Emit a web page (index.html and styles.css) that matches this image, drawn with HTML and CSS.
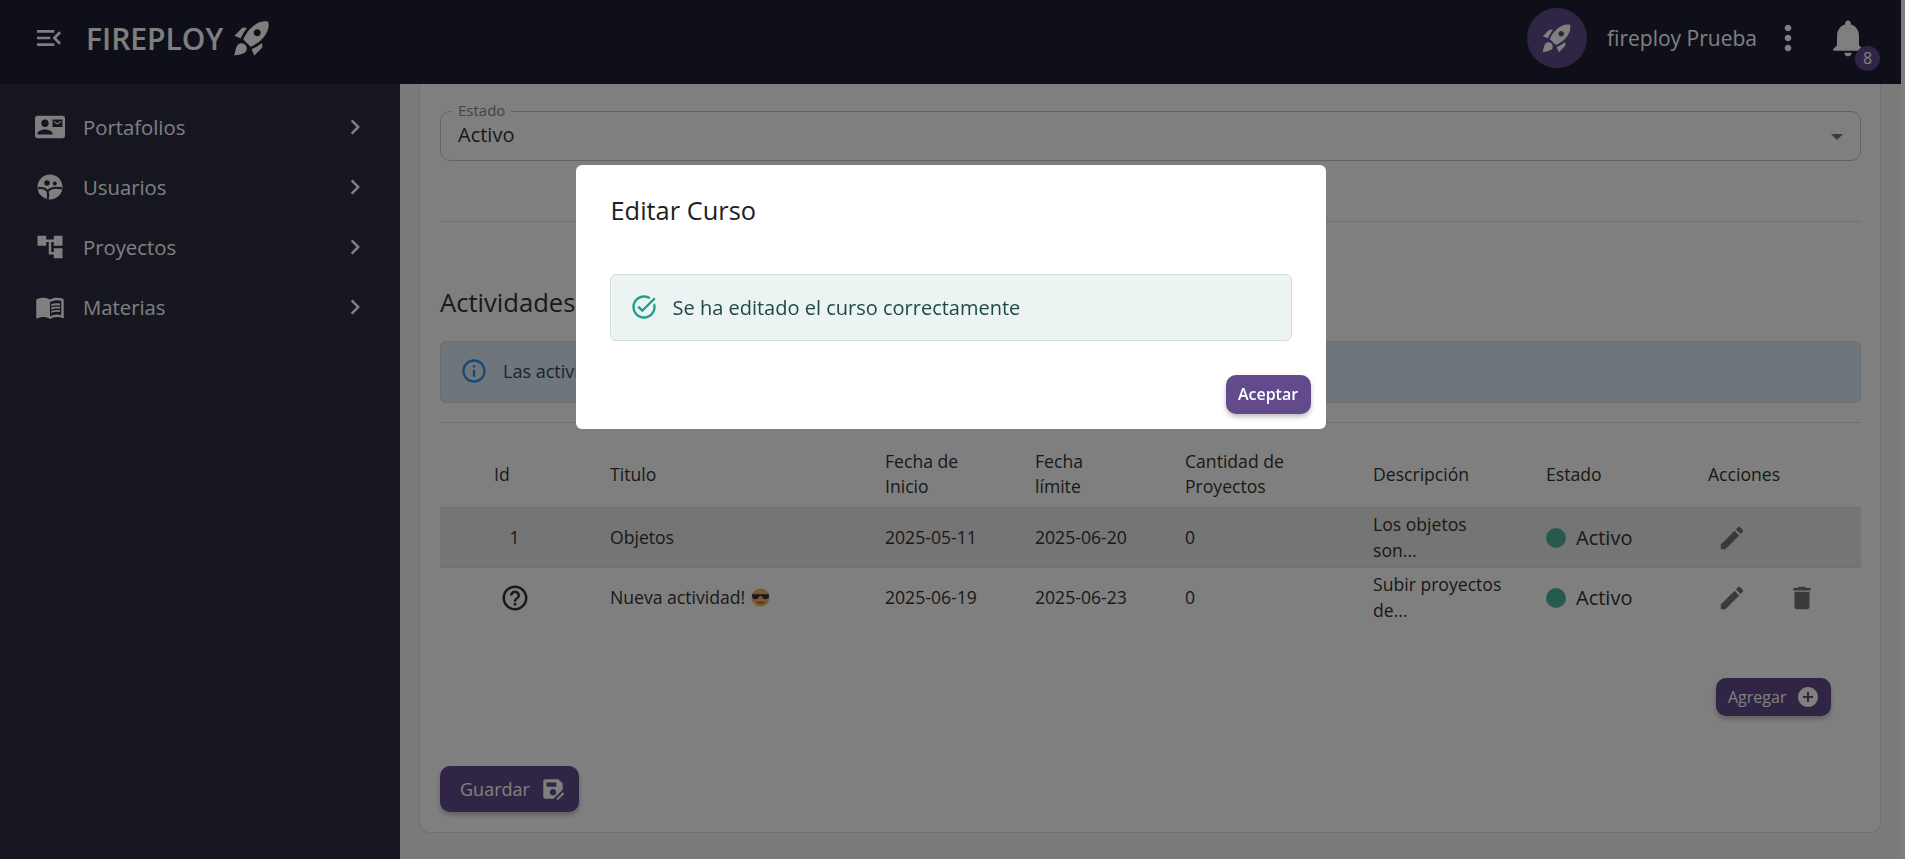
FILE: index.html
```html
<!DOCTYPE html>
<html lang="es">
<head>
  <meta charset="UTF-8" />
  <meta name="viewport" content="width=device-width, initial-scale=1" />
  <title>Fireploy</title>
  <link rel="stylesheet" href="styles.css">
</head>
<body>

  <div class="app">
    <header class="topbar">
      <div class="brand">
        <svg class="menu-icon" viewBox="0 0 24 24"><path d="M3 18h13v-2H3v2zm0-5h10v-2H3v2zm0-7v2h13V6H3zm18 9.59L17.42 12 21 8.41 19.59 7l-5 5 5 5L21 15.59z"/></svg>
        <span class="brand-name">FIREPLOY</span>
        <svg class="brand-rocket" viewBox="0 0 24 24"><path d="M9.19 6.35c-2.04 2.29-3.44 5.58-3.57 5.89L2 10.69l4.05-4.05c.47-.47 1.15-.68 1.81-.55l1.33.26zM11.17 17s3.74-1.55 5.89-3.7c5.4-5.4 4.5-9.62 4.21-10.57-.95-.3-5.17-1.19-10.57 4.21C8.55 9.09 7 12.83 7 12.83L11.17 17zm6.48-2.19c-2.29 2.04-5.58 3.44-5.89 3.57L13.31 22l4.05-4.05c.47-.47.68-1.15.55-1.81l-.26-1.33zM9 18c0 .83-.34 1.58-.88 2.12C6.94 21.3 2 22 2 22s.7-4.94 1.88-6.12C4.42 15.34 5.17 15 6 15c1.66 0 3 1.34 3 3zm4-9c0-1.1.9-2 2-2s2 .9 2 2-.9 2-2 2-2-.9-2-2z"/></svg>
      </div>
      <div class="user">
        <div class="avatar">
          <svg viewBox="0 0 24 24"><path d="M9.19 6.35c-2.04 2.29-3.44 5.58-3.57 5.89L2 10.69l4.05-4.05c.47-.47 1.15-.68 1.81-.55l1.33.26zM11.17 17s3.74-1.55 5.89-3.7c5.4-5.4 4.5-9.62 4.21-10.57-.95-.3-5.17-1.19-10.57 4.21C8.55 9.09 7 12.83 7 12.83L11.17 17zm6.48-2.19c-2.29 2.04-5.58 3.44-5.89 3.57L13.31 22l4.05-4.05c.47-.47.68-1.15.55-1.81l-.26-1.33zM9 18c0 .83-.34 1.58-.88 2.12C6.94 21.3 2 22 2 22s.7-4.94 1.88-6.12C4.42 15.34 5.17 15 6 15c1.66 0 3 1.34 3 3zm4-9c0-1.1.9-2 2-2s2 .9 2 2-.9 2-2 2-2-.9-2-2z"/></svg>
        </div>
        <span class="user-name">fireploy Prueba</span>
        <svg class="more-icon" viewBox="0 0 24 24"><path d="M12 8c1.1 0 2-.9 2-2s-.9-2-2-2-2 .9-2 2 .9 2 2 2zm0 2c-1.1 0-2 .9-2 2s.9 2 2 2 2-.9 2-2-.9-2-2-2zm0 6c-1.1 0-2 .9-2 2s.9 2 2 2 2-.9 2-2-.9-2-2-2z"/></svg>
        <div class="bell">
          <svg viewBox="0 0 24 24"><path d="M12 22c1.1 0 2-.9 2-2h-4c0 1.1.89 2 2 2zm6-6v-5c0-3.07-1.64-5.64-4.5-6.32V4c0-.83-.67-1.5-1.5-1.5s-1.5.67-1.5 1.5v.68C7.63 5.36 6 7.92 6 11v5l-2 2v1h16v-1l-2-2z"/></svg>
          <span class="badge">8</span>
        </div>
      </div>
    </header>

    <div class="layout">
      <nav class="sidebar">
        <a class="nav-item">
          <svg class="nav-icon" viewBox="0 0 24 24"><path d="M21 8V7l-3 2-3-2v1l3 2 3-2zm1-5H2C.9 3 0 3.9 0 5v14c0 1.1.9 2 2 2h20c1.1 0 1.99-.9 1.99-2L24 5c0-1.1-.9-2-2-2zM8 6c1.66 0 3 1.34 3 3s-1.34 3-3 3-3-1.34-3-3 1.34-3 3-3zm6 12H2v-1c0-2 4-3.1 6-3.1s6 1.1 6 3.1v1zm8-6h-8V6h8v6z"/></svg>
          <span class="nav-label">Portafolios</span>
          <svg class="nav-arrow" viewBox="0 0 24 24"><path d="M10 6 8.59 7.41 13.17 12l-4.58 4.59L10 18l6-6z"/></svg>
        </a>
        <a class="nav-item">
          <svg class="nav-icon" viewBox="0 0 24 24">
            <circle cx="12" cy="12" r="10" />
            <circle class="icon-cut" cx="9.600" cy="8.800" r="2.200" />
            <circle class="icon-cut" cx="15.800" cy="9.200" r="1.600" />
            <path class="icon-line" d="M2.500 13c3-.6 6 .2 7.600 2.500.6 1.800.5 4.200 0 6.500M10.100 15.500c1.800-2.400 6.400-3.400 11.400-2.400" />
          </svg>
          <span class="nav-label">Usuarios</span>
          <svg class="nav-arrow" viewBox="0 0 24 24"><path d="M10 6 8.59 7.41 13.17 12l-4.58 4.59L10 18l6-6z"/></svg>
        </a>
        <a class="nav-item">
          <svg class="nav-icon" viewBox="0 0 24 24"><path d="M22 11V3h-7v3H9V3H2v8h7V8h2v10h4v3h7v-8h-7v3h-2V8h2v3z"/></svg>
          <span class="nav-label">Proyectos</span>
          <svg class="nav-arrow" viewBox="0 0 24 24"><path d="M10 6 8.59 7.41 13.17 12l-4.58 4.59L10 18l6-6z"/></svg>
        </a>
        <a class="nav-item">
          <svg class="nav-icon" viewBox="0 0 24 24"><path d="M21 5c-1.11-.35-2.33-.5-3.500-.5-1.950 0-4.050.4-5.500 1.500-1.450-1.100-3.550-1.500-5.500-1.500S2.450 4.900 1 6v14.650c0 .25.25.5.5.5.1 0 .15-.05.25-.05C3.100 20.450 5.050 20 6.500 20c1.950 0 4.050.4 5.500 1.500 1.350-.85 3.800-1.500 5.500-1.500 1.650 0 3.350.3 4.750 1.050.1.05.15.05.25.05.25 0 .5-.25.5-.5V6c-.6-.45-1.250-.75-2-1zm0 13.500c-1.100-.35-2.300-.5-3.500-.5-1.700 0-4.150.65-5.500 1.500V8c1.350-.85 3.800-1.500 5.500-1.500 1.200 0 2.400.15 3.500.5v11.500z"/><path d="M17.500 10.500c.88 0 1.730.09 2.500.26V9.240c-.79-.15-1.640-.24-2.500-.24-1.700 0-3.240.29-4.500.83v1.660c1.130-.64 2.700-.99 4.500-.99zM13 12.490v1.660c1.130-.64 2.700-.99 4.500-.99.88 0 1.730.09 2.500.26V11.900c-.79-.15-1.640-.24-2.500-.24-1.700 0-3.240.3-4.500.83zM17.500 14.330c-1.700 0-3.240.29-4.500.83v1.660c1.130-.64 2.700-.99 4.500-.99.88 0 1.730.09 2.500.26v-1.520c-.79-.16-1.640-.24-2.500-.24z"/></svg>
          <span class="nav-label">Materias</span>
          <svg class="nav-arrow" viewBox="0 0 24 24"><path d="M10 6 8.59 7.41 13.17 12l-4.58 4.59L10 18l6-6z"/></svg>
        </a>
      </nav>

      <main class="content">
        <section class="card">
          <div class="field">
            <label class="field-label">Estado</label>
            <span class="field-value">Activo</span>
            <span class="field-caret"></span>
          </div>

          <hr class="divider divider-top" />

          <h2 class="section-title">Actividades</h2>

          <div class="info-alert">
            <svg class="info-icon" viewBox="0 0 24 24"><path d="M11 7h2v2h-2zm0 4h2v6h-2zm1-9C6.480 2 2 6.480 2 12s4.480 10 10 10 10-4.480 10-10S17.520 2 12 2zm0 18c-4.410 0-8-3.590-8-8s3.590-8 8-8 8 3.590 8 8-3.590 8-8 8z"/></svg>
            <span>Las actividades</span>
          </div>

          <hr class="divider divider-table" />

          <table class="activities">
            <colgroup>
              <col class="col-id" /><col class="col-title" /><col class="col-date" /><col class="col-date" />
              <col class="col-count" /><col class="col-desc" /><col class="col-state" /><col class="col-actions" />
            </colgroup>
            <thead>
              <tr>
                <th class="th-id">Id</th>
                <th>Titulo</th>
                <th>Fecha de<br />Inicio</th>
                <th>Fecha<br />límite</th>
                <th>Cantidad de<br />Proyectos</th>
                <th>Descripción</th>
                <th>Estado</th>
                <th>Acciones</th>
              </tr>
            </thead>
            <tbody>
              <tr class="row-hover">
                <td class="td-id">1</td>
                <td>Objetos</td>
                <td>2025-05-11</td>
                <td>2025-06-20</td>
                <td>0</td>
                <td>Los objetos<br />son...</td>
                <td><span class="state"><span class="state-dot"></span>Activo</span></td>
                <td>
                  <div class="actions">
                    <svg class="action-icon" viewBox="0 0 24 24"><path d="M3 17.250V21h3.750L17.810 9.940l-3.750-3.750L3 17.250zM20.710 7.040c.39-.39.39-1.020 0-1.410l-2.340-2.340c-.39-.39-1.020-.39-1.410 0l-1.830 1.830 3.750 3.750 1.830-1.830z"/></svg>
                  </div>
                </td>
              </tr>
              <tr>
                <td class="td-id">
                  <svg class="help-icon" viewBox="0 0 24 24"><path d="M11 18h2v-2h-2v2zm1-16C6.480 2 2 6.480 2 12s4.480 10 10 10 10-4.480 10-10S17.520 2 12 2zm0 18c-4.410 0-8-3.590-8-8s3.590-8 8-8 8 3.590 8 8-3.590 8-8 8zm0-14c-2.210 0-4 1.790-4 4h2c0-1.100.9-2 2-2s2 .9 2 2c0 2-3 1.750-3 5h2c0-2.250 3-2.500 3-5 0-2.210-1.790-4-4-4z"/></svg>
                </td>
                <td>
                  <span class="title-emoji">Nueva actividad!
                    <svg class="emoji" viewBox="0 0 20 20">
                      <circle class="emoji-face" cx="10" cy="10" r="9.500" />
                      <path class="emoji-glass" d="M1 6.500h18v1.500c0 2.500-1.500 3.800-3.800 3.800-2 0-3.400-1.300-4-3.300H8.800c-.6 2-2 3.300-4 3.300C2.500 11.800 1 10.500 1 8z" />
                      <path class="emoji-mouth" d="M6.500 14.500c2 1.600 5 1.600 7 0" />
                    </svg>
                  </span>
                </td>
                <td>2025-06-19</td>
                <td>2025-06-23</td>
                <td>0</td>
                <td>Subir proyectos<br />de...</td>
                <td><span class="state"><span class="state-dot"></span>Activo</span></td>
                <td>
                  <div class="actions">
                    <svg class="action-icon" viewBox="0 0 24 24"><path d="M3 17.250V21h3.750L17.810 9.940l-3.750-3.750L3 17.250zM20.710 7.040c.39-.39.39-1.020 0-1.410l-2.340-2.340c-.39-.39-1.020-.39-1.410 0l-1.830 1.830 3.750 3.750 1.830-1.830z"/></svg>
                    <svg class="action-icon" viewBox="0 0 24 24"><path d="M6 19c0 1.100.9 2 2 2h8c1.100 0 2-.9 2-2V7H6v12zM19 4h-3.500l-1-1h-5l-1 1H5v2h14V4z"/></svg>
                  </div>
                </td>
              </tr>
            </tbody>
          </table>

          <div class="add-row">
            <button class="btn btn-add">Agregar
              <svg viewBox="0 0 24 24"><path d="M12 2C6.480 2 2 6.480 2 12s4.480 10 10 10 10-4.480 10-10S17.520 2 12 2zm5 11h-4v4h-2v-4H7v-2h4V7h2v4h4v2z"/></svg>
            </button>
          </div>

          <button class="btn btn-save">Guardar
            <svg viewBox="0 0 24 24"><path d="M21 12.400V7l-4-4H5c-1.110 0-2 .9-2 2v14c0 1.100.89 2 2 2h7.400L21 12.400zM15 15c0 1.660-1.340 3-3 3s-3-1.340-3-3 1.340-3 3-3 3 1.340 3 3zM6 6h9v4H6V6z"/><path d="M15.500 22v-1.300l5.600-5.600 1.300 1.300-5.600 5.600z"/></svg>
          </button>
        </section>
      </main>
    </div>
  </div>
  <div class="scroll-strip"></div>

  <div class="backdrop">
    <div class="dialog">
      <h2 class="dialog-title">Editar Curso</h2>
      <div class="success-alert">
        <svg class="success-icon" viewBox="0 0 24 24"><path d="M22 5.180 10.590 16.600l-4.240-4.240 1.410-1.410 2.830 2.830 10-10L22 5.180zm-2.210 5.040c.13.57.21 1.170.21 1.780 0 4.420-3.580 8-8 8s-8-3.580-8-8 3.580-8 8-8c1.580 0 3.040.46 4.280 1.210l1.440-1.440C16.100 2.670 14.130 2 12 2 6.480 2 2 6.480 2 12s4.480 10 10 10 10-4.480 10-10c0-1.190-.22-2.330-.6-3.390l-1.610 1.610z"/></svg>
        <span>Se ha editado el curso correctamente</span>
      </div>
      <div class="dialog-actions">
        <button class="btn btn-accept">Aceptar</button>
      </div>
    </div>
  </div>

</body>
</html>
```

FILE: styles.css
```css
* {
  box-sizing: border-box;
}

body {
  font-family: "Open Sans", Arial, sans-serif;
  margin: 0;
  height: 859px;
  overflow: hidden;
  display: flex;
  background: #f5f5f5;
  color: #333;
}

svg {
  fill: currentColor;
  display: block;
  flex-shrink: 0;
}

.app {
  flex: 1;
  min-width: 0;
  display: flex;
  flex-direction: column;
}

.scroll-strip {
  width: 4px;
  background: #fafafa;
}

/* top bar */
.topbar {
  height: 84px;
  background: #1c1e32;
  color: #fff;
  display: flex;
  justify-content: space-between;
  align-items: center;
  padding: 0 31px 8px 33px;
  flex-shrink: 0;
}

.brand {
  display: flex;
  align-items: center;
}

.menu-icon {
  width: 32px;
  height: 32px;
}

.brand-name {
  font-size: 30px;
  font-weight: 600;
  margin-left: 21px;
}

.brand-rocket {
  width: 42px;
  height: 42px;
  margin-left: 8px;
}

.user {
  display: flex;
  align-items: center;
}

.avatar {
  width: 60px;
  height: 60px;
  border-radius: 50%;
  background: #624a8c;
  display: flex;
  align-items: center;
  justify-content: center;
}

.avatar svg {
  width: 34px;
  height: 34px;
}

.user-name {
  font-size: 21px;
  margin-left: 20px;
}

.more-icon {
  width: 40px;
  height: 40px;
  margin-left: 11px;
}

.bell {
  position: relative;
  margin-left: 18px;
  width: 44px;
  height: 44px;
}

.bell svg {
  width: 44px;
  height: 44px;
}

.badge {
  position: absolute;
  left: 29px;
  top: 30px;
  width: 25px;
  height: 25px;
  border-radius: 50%;
  background: #624a8c;
  font-size: 16px;
  line-height: 25px;
  text-align: center;
}

/* sidebar */
.layout {
  flex: 1;
  display: flex;
  min-height: 0;
}

.sidebar {
  width: 400px;
  flex-shrink: 0;
  background: #2a2d3e;
  color: #fff;
  padding-top: 13px;
}

.nav-item {
  height: 60px;
  display: flex;
  align-items: center;
  padding: 0 30px 0 35px;
}

.nav-icon {
  width: 30px;
  height: 30px;
}

.icon-cut {
  fill: #2a2d3e;
}

.icon-line {
  fill: none;
  stroke: #2a2d3e;
  stroke-width: 1.7;
}

.nav-label {
  flex: 1;
  font-size: 20.3px;
  margin-left: 18px;
}

.nav-arrow {
  width: 30px;
  height: 30px;
}

/* main content */
.content {
  flex: 1;
  min-width: 0;
  padding: 0 20px 27px 19px;
}

.card {
  background: #fff;
  border: 1px solid #e0e0e0;
  border-top: 0;
  border-radius: 0 0 10px 10px;
  padding: 27px 19px 20px 20px;
}

.field {
  position: relative;
  height: 50px;
  border: 1px solid #c4c4c4;
  border-radius: 10px;
  padding: 18px 17px 0;
}

.field-label {
  position: absolute;
  left: 11px;
  top: -12px;
  padding: 0 6px;
  background: #fff;
  font-size: 15px;
  line-height: 20px;
  color: #888;
}

.field-value {
  display: block;
  font-size: 20px;
  line-height: 26px;
  color: #333;
  margin-top: -8px;
}

.field-caret {
  position: absolute;
  right: 17px;
  top: 22px;
  border-left: 6px solid transparent;
  border-right: 6px solid transparent;
  border-top: 6px solid #757575;
}

.divider {
  border: none;
  border-top: 1px solid #e0e0e0;
  margin: 0;
}

.divider-top {
  margin-top: 60px;
}

.divider-table {
  margin-top: 19px;
}

.section-title {
  font-size: 25.6px;
  font-weight: 500;
  line-height: 33px;
  color: #333;
  margin: 64px 0 22px;
}

.info-alert {
  height: 62px;
  display: flex;
  align-items: center;
  gap: 15px;
  padding: 0 0 2px 19px;
  background: #dfecf6;
  border: 1px solid #cfd8e0;
  border-radius: 6px;
  font-size: 18px;
  color: #2d4a63;
}

.info-icon {
  width: 28px;
  height: 28px;
  color: #2f8fe8;
}

/* table */
.activities {
  width: 100%;
  table-layout: fixed;
  border-collapse: collapse;
  font-size: 17.6px;
  line-height: 25.5px;
  color: #333;
}

.col-id { width: 154px; }
.col-title { width: 275px; }
.col-date { width: 150px; }
.col-count { width: 188px; }
.col-desc { width: 173px; }
.col-state { width: 162px; }

.activities th {
  height: 84px;
  padding: 19px 16px 0;
  text-align: left;
  font-weight: 400;
  border-bottom: 1px solid #e0e0e0;
}

.activities td {
  height: 60px;
  padding: 1px 16px 0;
  border-bottom: 1px solid #e0e0e0;
}

.activities tbody tr:last-child td {
  border-bottom: 0;
}

.activities .th-id {
  padding-left: 54px;
}

.activities .td-id {
  text-align: center;
  padding: 1px 5px 0 0;
}

.row-hover {
  background: #ebebeb;
}

.help-icon {
  width: 30px;
  height: 30px;
  margin: 0 auto;
  color: #333;
}

.title-emoji {
  display: inline-flex;
  align-items: center;
  gap: 6px;
}

.emoji {
  width: 19px;
  height: 19px;
}

.emoji-face { fill: #f0b45c; }
.emoji-glass { fill: #3a2a50; }
.emoji-mouth { fill: none; stroke: #8a4a20; stroke-width: 1.2; }

.state {
  display: flex;
  align-items: center;
  gap: 10px;
  font-size: 20px;
}

.state-dot {
  width: 20px;
  height: 20px;
  border-radius: 50%;
  background: #4db5a3;
}

.actions {
  display: flex;
  gap: 40px;
  padding-left: 9px;
}

.action-icon {
  width: 30px;
  height: 30px;
  color: #757575;
}

/* buttons */
.btn {
  font-family: inherit;
  border: none;
  border-radius: 10px;
  color: #fff;
  background: #624a8c;
  display: inline-flex;
  align-items: center;
  box-shadow: 0 3px 5px rgba(0, 0, 0, 0.25);
}

.add-row {
  display: flex;
  justify-content: flex-end;
  margin-top: 51px;
  padding-right: 30px;
}

.btn-add {
  width: 115px;
  height: 38px;
  font-size: 16px;
  padding: 0 0 0 12px;
  gap: 10px;
}

.btn-add svg {
  width: 24px;
  height: 24px;
}

.btn-save {
  width: 139px;
  height: 46px;
  font-size: 18px;
  padding: 0 0 0 20px;
  gap: 10px;
  margin-top: 50px;
}

.btn-save svg {
  width: 26px;
  height: 26px;
}

/* dialog */
.backdrop {
  position: fixed;
  inset: 0;
  background: rgba(0, 0, 0, 0.5);
  padding: 165px 4px 0 0;
  display: flex;
  justify-content: center;
  align-items: flex-start;
}

.dialog {
  width: 750px;
  height: 264px;
  background: #fff;
  border-radius: 6px;
  padding-top: 30px;
  display: flex;
  flex-direction: column;
}

.dialog-title {
  font-size: 25.4px;
  font-weight: 400;
  line-height: 30px;
  color: #212121;
  margin: 0 35px;
}

.success-alert {
  height: 67px;
  margin: 49px 34px 0;
  display: flex;
  align-items: center;
  gap: 15px;
  padding-left: 19px;
  background: #ebf4f2;
  border: 1px solid #d5dedb;
  border-radius: 6px;
  font-size: 20px;
  color: #1f4a44;
}

.success-icon {
  width: 28px;
  height: 28px;
  margin-bottom: 2px;
  color: #1f9d8b;
}

.dialog-actions {
  display: flex;
  justify-content: flex-end;
  margin-top: 34px;
  padding-right: 15px;
}

.btn-accept {
  width: 85px;
  height: 39px;
  justify-content: center;
  padding: 0 0 2px;
  font-size: 16px;
  font-weight: 600;
}
```
